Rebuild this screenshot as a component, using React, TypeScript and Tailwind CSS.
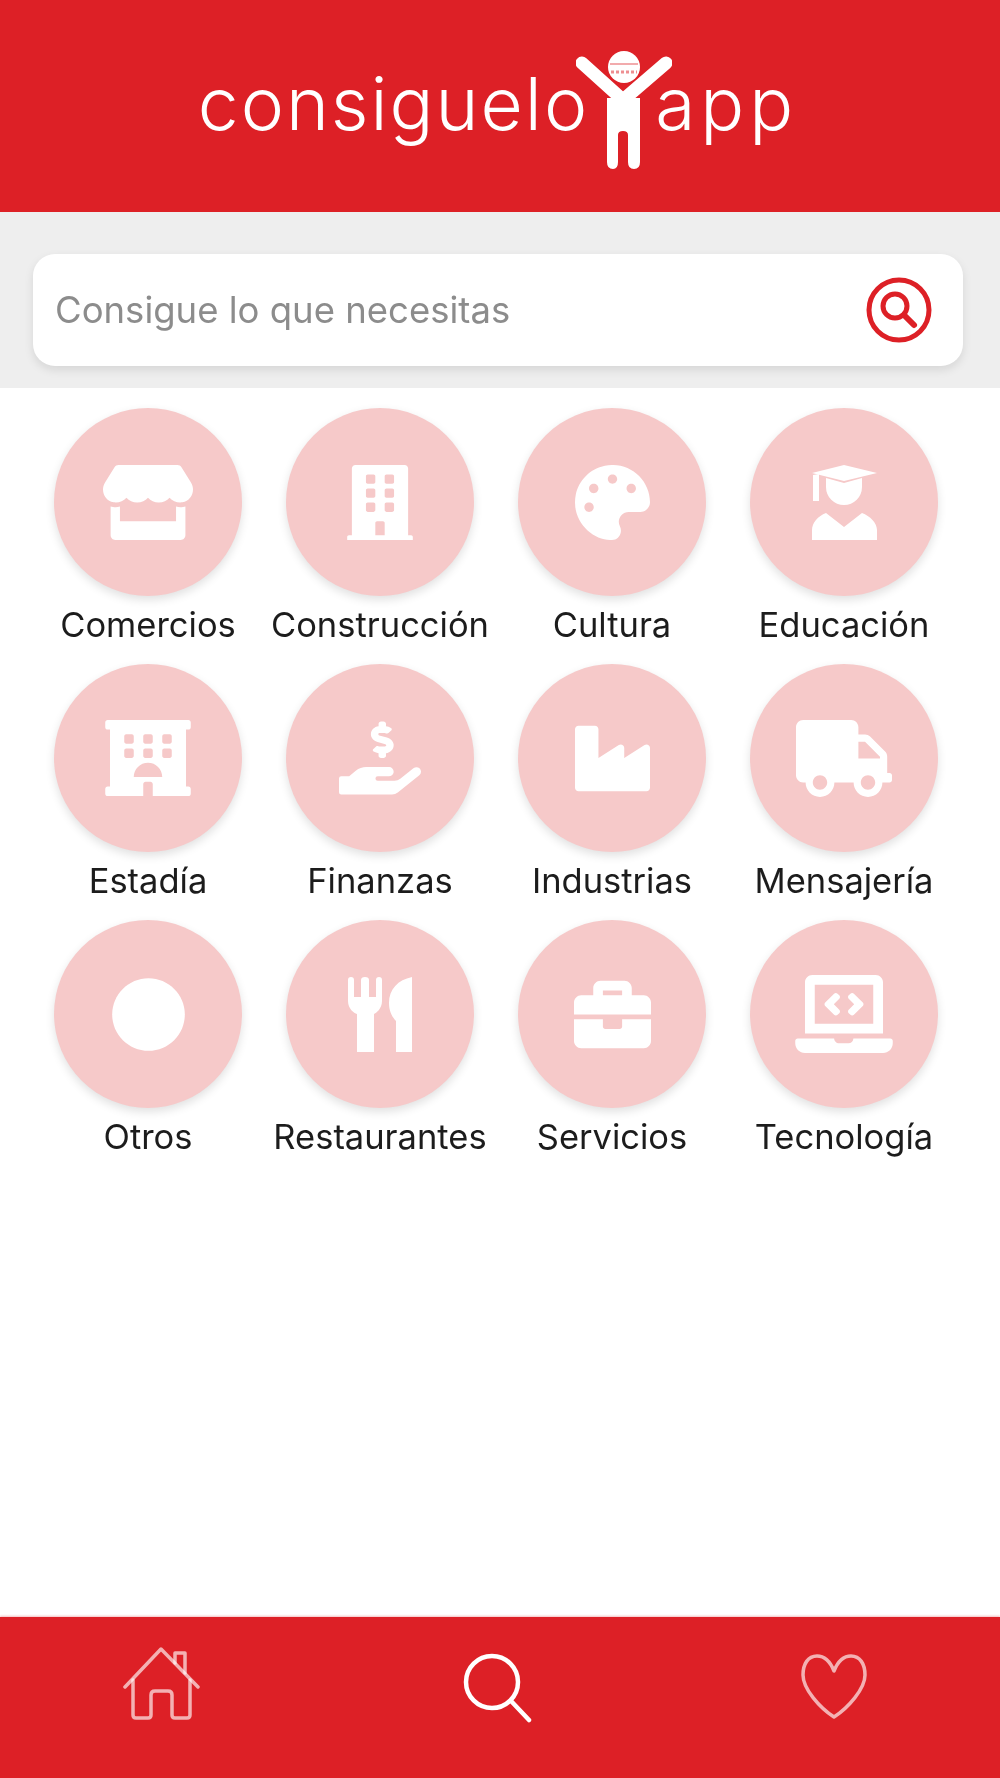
import React from "react";
import {
  FaStore, FaBuilding, FaPalette, FaHotel, FaHandHoldingUsd,
  FaIndustry, FaTruck, FaCircle, FaBriefcase, FaLaptopCode,
} from "react-icons/fa";

function Grad({ className }: { className?: string }) {
  return (
    <svg viewBox="0 0 65 75" fill="white" className={className}>
      <path d="M0 8 L32 0 L65 8 L32 16 Z" />
      <path d="M14 13 L32 18 L50 13 V22 A18 18 0 0 1 14 22 Z" />
      <path d="M1 10 L7 9 V36 H1 Z" />
      <path d="M0 75 V65 C0 58 6 51 14 48 L32 62 L50 48 C58 51 65 58 65 65 V75 Z" />
    </svg>
  );
}

function Cutlery({ className }: { className?: string }) {
  return (
    <svg viewBox="0 0 64 75" fill="white" className={className}>
      <path d="M0 3 Q0 0 3 0 Q6 0 6 3 V20 H13 V3 Q13 0 17 0 Q21 0 21 3 V20 H28 V3 Q28 0 31 0 Q34 0 34 3 V24 C34 32 28 36 26 37 V75 H9 V37 C6 36 0 32 0 24 Z" />
      <path d="M64 0 V75 H48 V44 C44 40 41 34 41 26 C41 12 50 3 64 0 Z" />
    </svg>
  );
}

const cats = [
  { label: "Comercios", Icon: FaStore, size: "h-[75px] w-[90px]" },
  { label: "Construcción", Icon: FaBuilding, size: "h-[75px] w-[66px]" },
  { label: "Cultura", Icon: FaPalette, size: "h-[75px] w-[75px]" },
  { label: "Educación", Icon: Grad, size: "h-[75px] w-[65px]" },
  { label: "Estadía", Icon: FaHotel, size: "h-[76px] w-[86px]" },
  { label: "Finanzas", Icon: FaHandHoldingUsd, size: "h-[76px] w-[82px]" },
  { label: "Industrias", Icon: FaIndustry, size: "h-[75px] w-[75px]" },
  { label: "Mensajería", Icon: FaTruck, size: "h-[77px] w-[96px]" },
  { label: "Otros", Icon: FaCircle, size: "h-[75px] w-[75px]" },
  { label: "Restaurantes", Icon: Cutlery, size: "h-[75px] w-[64px]" },
  { label: "Servicios", Icon: FaBriefcase, size: "h-[77px] w-[77px]" },
  { label: "Tecnología", Icon: FaLaptopCode, size: "h-[78px] w-[98px]" },
];

function Man() {
  return (
    <svg width="96" height="130" viewBox="0 0 96 130" className="shrink-0">
      <circle cx="48" cy="19" r="16" fill="white" />
      <path d="M34 16 H62" stroke="#ee8f92" strokeWidth="1.5" />
      <path d="M35 24 H61" stroke="#ee8f92" strokeWidth="3" strokeDasharray="3 2" />
      <path d="M6 15 L47 52 L90 15" fill="none" stroke="white" strokeWidth="13" strokeLinecap="round" strokeLinejoin="round" />
      <path d="M31 50 H64 V114 Q64 121 58 121 Q52 121 52 114 V87 Q52 83 47 83 Q42 83 42 87 V114 Q42 121 37 121 Q31 121 31 114 Z" fill="white" />
    </svg>
  );
}

export default function App() {
  return (
    <div className="flex h-[1778px] w-[1000px] flex-col overflow-hidden bg-white font-['Inter',sans-serif]">
      <header className="flex h-[212px] shrink-0 items-start justify-center bg-[#dd2026] pt-[40px] pr-[4px]">
        <div className="flex items-start text-[73px] leading-[100px] font-light text-white blur-[0.6px]">
          <span className="mt-[14px] tracking-[2px]">consiguelo</span>
          <span className="-ml-[13px] mt-[8px] flex"><Man /></span>
          <span className="-ml-[17px] mt-[14px] tracking-[5px]">app</span>
        </div>
      </header>

      <div className="h-[176px] shrink-0 bg-[#eeeeee] pt-[42px] pr-[37px] pl-[33px]">
        <div className="flex h-[112px] items-center justify-between rounded-[22px] bg-white pr-[29px] pl-[22px] shadow-[0_4px_10px_rgba(0,0,0,0.1)]">
          <span className="text-[36.5px] text-[#8c8c8c] blur-[0.6px]">Consigue lo que necesitas</span>
          <svg width="70" height="70" viewBox="0 0 70 70" fill="none" stroke="#dd2026" className="blur-[0.4px]">
            <circle cx="35" cy="35" r="30" strokeWidth="5" />
            <circle cx="31" cy="31" r="12" strokeWidth="5" />
            <path d="M40 40 L50 50" strokeWidth="6" strokeLinecap="round" />
          </svg>
        </div>
      </div>

      <main className="flex-1 pt-[20px] pr-[40px] pl-[32px]">
        <div className="grid grid-cols-4">
          {cats.map(({ label, Icon, size }) => (
            <div key={label} className="flex h-[256px] flex-col items-center">
              <div className="flex h-[188px] w-[188px] items-center justify-center rounded-full bg-[#f6c9c9] shadow-[0_4px_10px_rgba(0,0,0,0.12)]">
                <Icon className={`${size} text-white blur-[0.5px]`} />
              </div>
              <div className="mt-[9px] text-[34.5px] leading-[40px] whitespace-nowrap text-[#1c1c1c] blur-[0.6px]">{label}</div>
            </div>
          ))}
        </div>
      </main>

      <nav className="flex h-[161px] shrink-0 items-start bg-[#dd2026] pt-[28px] pl-[120px] shadow-[0_-1px_2px_rgba(222,32,39,0.3)]">
        <svg width="84" height="78" viewBox="0 0 84 78" fill="none" stroke="white" strokeOpacity="0.65" strokeWidth="3.5" strokeLinecap="round" strokeLinejoin="round" className="blur-[0.4px]">
          <path d="M5 42 L41 4 L78 42" />
          <path d="M13 35 V70 Q13 73 16 73 H28 Q31 73 31 70 V50 Q31 46 35 46 H48 Q52 46 52 50 V70 Q52 73 55 73 H67 Q70 73 70 70 V35" />
          <path d="M55 18 V8 H65 V28" />
        </svg>
        <svg width="72" height="72" viewBox="0 0 72 72" fill="none" stroke="white" strokeWidth="4.5" strokeLinecap="round" className="ml-[257px] mt-[6px] blur-[0.3px]">
          <circle cx="31" cy="31" r="26" />
          <path d="M51 51 L68 69" />
        </svg>
        <svg width="68" height="70" viewBox="0 0 68 70" fill="none" stroke="white" strokeOpacity="0.65" strokeWidth="3.5" strokeLinejoin="round" className="ml-[267px] mt-[7px] blur-[0.3px]">
          <path d="M34 19 C30 9 24 4 17 4 C8 4 3 12 3 23 C3 37 20 56 34 65 C48 56 65 37 65 23 C65 12 60 4 51 4 C44 4 38 9 34 19 Z" />
        </svg>
      </nav>
    </div>
  );
}
